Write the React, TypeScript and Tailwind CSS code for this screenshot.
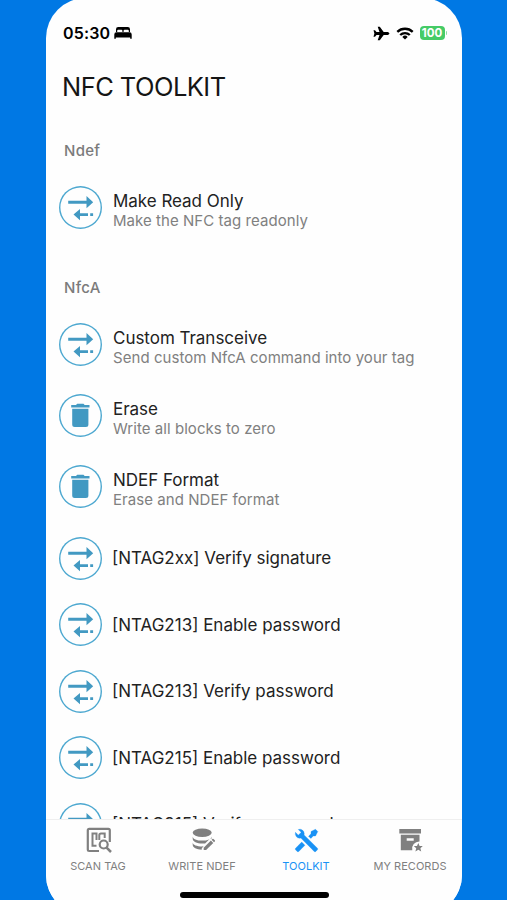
import type { ReactNode } from "react";
import { clsx } from "clsx";

type IconName = "transfer" | "trash";

interface Tool {
  title: string;
  subtitle?: string;
  icon: IconName;
}

const ndefTools: Tool[] = [{ title: "Make Read Only", subtitle: "Make the NFC tag readonly", icon: "transfer" }];

const nfcaTools: Tool[] = [
  { title: "Custom Transceive", subtitle: "Send custom NfcA command into your tag", icon: "transfer" },
  { title: "Erase", subtitle: "Write all blocks to zero", icon: "trash" },
  { title: "NDEF Format", subtitle: "Erase and NDEF format", icon: "trash" },
  { title: "[NTAG2xx] Verify signature", icon: "transfer" },
  { title: "[NTAG213] Enable password", icon: "transfer" },
  { title: "[NTAG213] Verify password", icon: "transfer" },
  { title: "[NTAG215] Enable password", icon: "transfer" },
  { title: "[NTAG215] Verify password", icon: "transfer" },
];

function TransferIcon() {
  return (
    <svg width="43" height="43" viewBox="0 0 43 43" fill="currentColor">
      <path d="M9.2 14.8h18.3v-4.7l6.7 6.1-6.7 6.1v-4.6H9.2z" />
      <path d="M14.5 28.6l6.5-5.7v4.3h8v2.9h-8v4.2z" />
      <path d="M31.2 27.2h2.9v2.9h-2.9z" />
    </svg>
  );
}

function TrashIcon() {
  return (
    <svg width="43" height="43" viewBox="0 0 43 43" fill="currentColor">
      <path d="M12.2 10.9h4.8l1.2-1.2h6.3l1.2 1.2h4.8v2.7H12.2z" />
      <path d="M13.2 14.7h16.2v15.7a2.5 2.5 0 0 1-2.5 2.5H15.7a2.5 2.5 0 0 1-2.5-2.5z" />
    </svg>
  );
}

function ToolRow({ tool }: { tool: Tool }) {
  return (
    <div
      className={clsx("flex shrink-0 pl-[12.5px]", tool.subtitle ? "h-[71.25px] gap-[11.5px]" : "h-[66.5px] gap-[10.5px]")}
    >
      <div className="flex h-[43px] w-[43px] shrink-0 items-center justify-center rounded-full text-[#4299c2] shadow-[inset_0_0_0_1.4px_#4da8d0]">
        {tool.icon === "transfer" ? <TransferIcon /> : <TrashIcon />}
      </div>
      <div className={clsx("whitespace-nowrap", tool.subtitle ? "pt-[5px]" : "pt-[11.5px]")}>
        <p className={clsx("text-[17px] leading-5 text-[#222]", tool.subtitle ? "tracking-[-0.03px]" : "tracking-[0px]")}>
          {tool.title}
        </p>
        {tool.subtitle && <p className="text-[15px] leading-5 tracking-[0.05px] text-[#808080]">{tool.subtitle}</p>}
      </div>
    </div>
  );
}

function SectionLabel({ children }: { children: ReactNode }) {
  return <h2 className="pl-[18px] text-[15px] leading-5 font-medium tracking-[0.3px] text-[#7b7b7b]">{children}</h2>;
}

function StatusBar() {
  return (
    <div className="flex h-5 items-center pr-[15px] pl-[17px] text-black">
      <span className="text-[16px] leading-5 font-semibold tracking-[0.15px]">05:30</span>
      <svg className="ml-[4px]" width="18" height="14" viewBox="0 0 18 14" fill="currentColor">
        <path d="M2 6V3.2A2.2 2.2 0 0 1 4.2 1h9.6A2.2 2.2 0 0 1 16 3.2V6h-1.2V4.7a1 1 0 0 0-1-1h-3.2a1 1 0 0 0-1 1V6H8.4V4.7a1 1 0 0 0-1-1H4.2a1 1 0 0 0-1 1V6z" />
        <path d="M2.4 6.3h13.2a2.1 2.1 0 0 1 2.1 2.1v4.3h-1.5V11.5H1.8v1.2H.3V8.4a2.1 2.1 0 0 1 2.1-2.1z" />
      </svg>
      <svg className="ml-auto" width="17" height="15" viewBox="0 0 17 15" fill="currentColor">
        <path d="M16.4 7.5c0 .9-1.2 1.5-2.4 1.5h-3.3L6.8 14.3H4.7l1.8-5.3H3.5L2 10.8H.5l.9-3.3-.9-3.3H2l1.5 1.8h3L4.7.7h2.1l3.9 5.3H14c1.2 0 2.4.6 2.4 1.5z" />
      </svg>
      <svg className="ml-[6px]" width="18" height="13" viewBox="0 0 18 13" fill="none" stroke="currentColor" strokeWidth="2.3">
        <path d="M1.3 4.9a11 11 0 0 1 15.4 0" />
        <path d="M4.2 8a6.9 6.9 0 0 1 9.6 0" />
        <path d="M9 12.6L6.3 9.9a3.8 3.8 0 0 1 5.4 0z" fill="currentColor" stroke="none" />
      </svg>
      <span className="ml-[6px] flex h-[14px] w-[25px] items-center justify-center rounded-[4px] bg-[#45cb66] pt-px text-[11.5px] leading-[13px] font-bold text-white">
        100
      </span>
      <span className="ml-px h-1 w-[1.5px] rounded-r-full bg-[#8edda2]" />
    </div>
  );
}

function ScanTagIcon() {
  return (
    <svg width="26" height="26" viewBox="0 0 26 26" fill="none" stroke="currentColor" strokeWidth="2.2">
      <path d="M13 24H3.2A1.4 1.4 0 0 1 1.8 22.6V3.2A1.4 1.4 0 0 1 3.2 1.8H22.4A1.4 1.4 0 0 1 23.8 3.2V15" />
      <path d="M10.5 18.7H6.5V6.5H10.5V13" strokeWidth="2" />
      <path d="M13.3 13V8.2A1.7 1.7 0 0 1 15 6.5H18.7V11" strokeWidth="2" />
      <circle cx="17.7" cy="17.5" r="4" />
      <path d="M20.6 20.6L25 25" strokeWidth="2.5" />
    </svg>
  );
}

function WriteNdefIcon() {
  return (
    <svg width="26" height="26" viewBox="0 0 26 26" fill="currentColor">
      <ellipse cx="12.2" cy="5.8" rx="9.5" ry="4.2" />
      <path d="M2.7 9.4v2.4c0 2.9 4.3 4.8 9.5 4.8 1 0 2-.1 2.9-.2l4-4c1.4-.8 2.6-1 2.6-1v-2c0 2.4-4.3 4.2-9.5 4.2s-9.5-1.8-9.5-4.2z" />
      <path d="M2.7 15.4v2.4c0 2.700 3.900 4.800 9 5l.1-1.500 1.800-2c-.500.100-.900.100-1.400.100-5.200 0-9.500-1.600-9.500-4z" />
      <path d="M13.700 20.700l7.200-7.200 2.400 2.400-7.200 7.200h-2.400z" />
      <path d="M21.600 12.800l.8-.8a.8.8 0 0 1 1.100 0l1.300 1.300a.8.8 0 0 1 0 1.100l-.8.8z" />
    </svg>
  );
}

function ToolkitIcon() {
  return (
    <svg width="27" height="27" viewBox="0 0 24 24" fill="currentColor" stroke="currentColor" strokeWidth="0.3">
      <path d="M21.71 20.29l-1.42 1.42a1 1 0 0 1-1.41 0L7 9.85A3.81 3.81 0 0 1 6 10a4 4 0 0 1-3.78-5.3l2.54 2.54.53-.53 1.42-1.42.53-.53L4.7 2.22A4 4 0 0 1 10 6a3.81 3.81 0 0 1-.15 1l11.86 11.88a1 1 0 0 1 0 1.41z" />
      <path d="M2.29 18.88a1 1 0 0 0 0 1.41l1.42 1.42a1 1 0 0 0 1.41 0l5.47-5.46-2.83-2.83z" />
      <path d="M20 2l-4 2v2l-2.17 2.17 2 2L18 8h2l2-4z" />
    </svg>
  );
}

function RecordsIcon() {
  return (
    <svg width="26" height="26" viewBox="0 0 26 26" fill="currentColor">
      <path d="M2.3 2H24v4.4H2.300z" />
      <path d="M3.8 7.800h18.700v6.600a7.200 7.200 0 0 0-7.200 8.900H3.800zM9.700 11.200v2.500h7v-2.500z" fillRule="evenodd" />
      <path d="M21.300 15.900l1.300 3 3.200.2-2.400 2.100.8 3.200-2.900-1.700-2.900 1.700.8-3.200-2.400-2.100 3.200-.2z" />
    </svg>
  );
}

const tabs = [
  { label: "SCAN TAG", icon: <ScanTagIcon />, iconClass: "pl-[2px]" },
  { label: "WRITE NDEF", icon: <WriteNdefIcon />, iconClass: "pl-[2px]" },
  { label: "TOOLKIT", icon: <ToolkitIcon />, iconClass: "pl-px", active: true },
  { label: "MY RECORDS", icon: <RecordsIcon />, iconClass: "pl-0" },
];

function TabBar() {
  return (
    <nav className="h-[96px] shrink-0 border-t border-[#efefef] bg-[#fefefe]">
      <div className="grid h-[72px] grid-cols-4 pt-[7px]">
        {tabs.map((tab) => (
          <div key={tab.label} className={clsx("flex flex-col items-center", tab.active ? "text-[#1992f5]" : "text-[#808080]")}>
            <div className={clsx("flex h-[26px] items-center", tab.iconClass)}>{tab.icon}</div>
            <span className="mt-[5px] text-[11px] leading-4 tracking-[0.03px] whitespace-nowrap">{tab.label}</span>
          </div>
        ))}
      </div>
      <div className="mx-auto h-[6px] w-[149px] rounded-full bg-black" />
    </nav>
  );
}

export default function App() {
  return (
    <div className="h-[900px] w-[507px] overflow-hidden bg-[#0078e4] font-['Inter',sans-serif]">
      <div className="-mt-[2px] ml-[46px] flex h-[917px] w-[416px] flex-col overflow-hidden rounded-[40px] bg-[#fefefe] pt-[25px]">
        <StatusBar />
        <h1 className="mt-[26px] pl-4 text-[25.5px] leading-9 tracking-[-0.55px] whitespace-nowrap text-[#151515]">
          NFC TOOLKIT
        </h1>
        <main className="mt-[36px] flex min-h-0 flex-1 flex-col overflow-hidden">
          <SectionLabel>Ndef</SectionLabel>
          <div className="mt-[25px]">
            {ndefTools.map((tool) => (
              <ToolRow key={tool.title} tool={tool} />
            ))}
          </div>
          <div className="mt-[20.5px]">
            <SectionLabel>NfcA</SectionLabel>
          </div>
          <div className="mt-[25px]">
            {nfcaTools.map((tool) => (
              <ToolRow key={tool.title} tool={tool} />
            ))}
          </div>
        </main>
        <TabBar />
      </div>
    </div>
  );
}
